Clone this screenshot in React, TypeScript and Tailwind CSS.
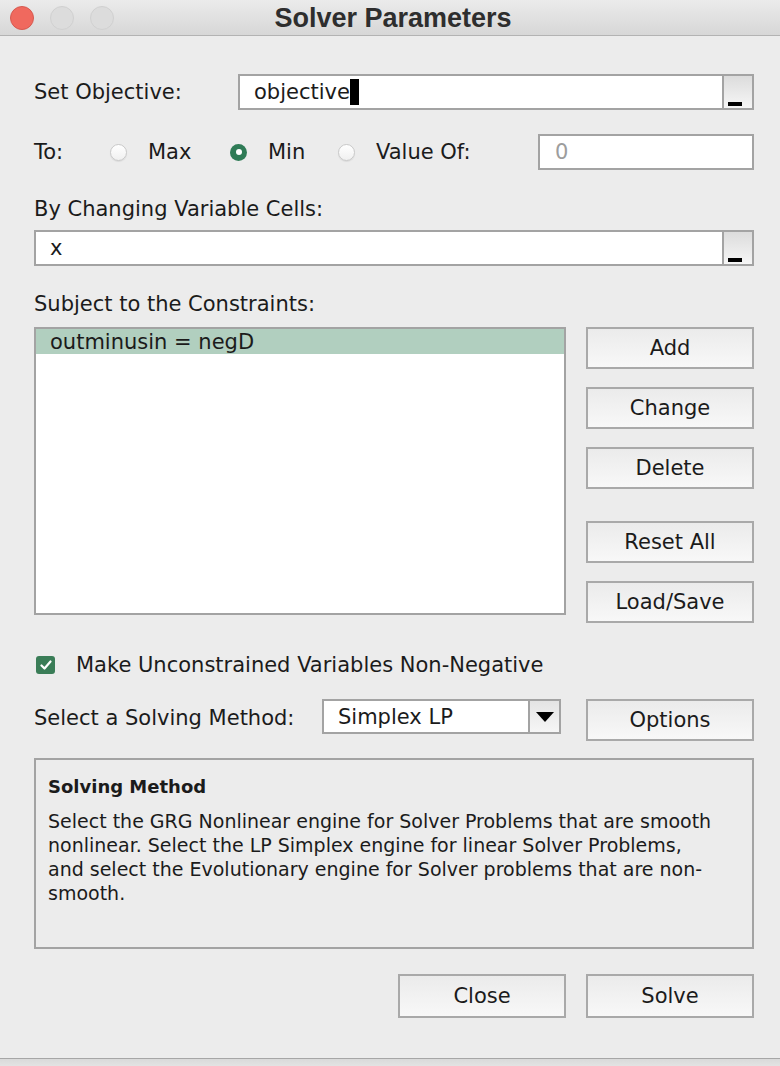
import { useState } from "react";

const btn =
  "w-[168px] flex items-center justify-center border-2 border-[#a9a9a9] bg-linear-to-b from-[#ebebeb] to-[#f8f8f8] text-[#1b1b1b]";

const Button = ({ label, className = "" }: { label: string; className?: string }) => (
  <button className={`${btn} ${className}`}>{label}</button>
);

// the little "_" picker button at the right of the cell inputs
const RefButton = () => (
  <div className="w-[30px] h-full border-l-2 border-[#a3a3a3] bg-linear-to-b from-[#dcdcdc] to-[#f6f6f6] flex items-end pl-[4px] pb-[2px]">
    <div className="w-[14px] h-[4px] bg-black" />
  </div>
);

const Radio = ({ checked }: { checked?: boolean }) =>
  checked ? (
    <div className="w-[17px] h-[17px] rounded-full bg-[#2f7b56] flex items-center justify-center">
      <div className="w-[6px] h-[6px] rounded-full bg-white" />
    </div>
  ) : (
    <div className="w-[17px] h-[17px] rounded-full border border-[#c9c9c9] bg-linear-to-b from-[#ffffff] to-[#f0f0f0] shadow-[0_1px_1px_rgba(0,0,0,0.08)]" />
  );

const App = () => {
  const [mode, setMode] = useState("min");
  const [nonNeg, setNonNeg] = useState(true);

  return (
    <div className="w-[780px] h-[1066px] bg-[#ececec] flex flex-col text-[21px] leading-[24px] text-[#1b1b1b] font-['DejaVu_Sans',sans-serif] overflow-hidden">
      {/* title bar */}
      <div className="h-[36px] shrink-0 grid grid-cols-[1fr_auto_1fr] items-center border-b border-[#b3b3b3] bg-linear-to-b from-[#ebebeb] to-[#d7d7d7]">
        <div className="flex items-center gap-[16px] pl-[10px]">
          <div className="w-[24px] h-[24px] rounded-full bg-[#f0695e] border border-[#d65a50]" />
          <div className="w-[24px] h-[24px] rounded-full bg-[#dcdcdc] border border-[#d0d0d0]" />
          <div className="w-[24px] h-[24px] rounded-full bg-[#dcdcdc] border border-[#d0d0d0]" />
        </div>
        <div className="font-['Liberation_Sans',sans-serif] font-bold text-[27px] text-[#2e2e2e] pl-[6px]">
          Solver Parameters
        </div>
        <div />
      </div>

      <div className="flex-1 flex flex-col pl-[34px] pr-[26px]">
        {/* objective */}
        <div className="mt-[38px] h-[36px] flex items-center">
          <div className="w-[204px]">Set Objective:</div>
          <div className="flex-1 h-[36px] border-2 border-[#a3a3a3] bg-white flex items-center">
            <div className="flex-1 flex items-center pl-[14px]">
              <span>objective</span>
              <span className="w-[9px] h-[26px] bg-black" />
            </div>
            <RefButton />
          </div>
        </div>

        {/* to */}
        <div className="mt-[24px] h-[36px] flex items-center">
          <div className="w-[76px]">To:</div>
          <div className="w-[120px] flex items-center gap-[21px]" onClick={() => setMode("max")}>
            <Radio checked={mode === "max"} />
            <span>Max</span>
          </div>
          <div className="w-[108px] flex items-center gap-[21px]" onClick={() => setMode("min")}>
            <Radio checked={mode === "min"} />
            <span>Min</span>
          </div>
          <div className="w-[200px] flex items-center gap-[21px]" onClick={() => setMode("value")}>
            <Radio checked={mode === "value"} />
            <span>Value Of:</span>
          </div>
          <div className="flex-1 h-[36px] border-2 border-[#a3a3a3] bg-white flex items-center pl-[15px] text-[#9d9d9d]">
            0
          </div>
        </div>

        {/* changing cells */}
        <div className="mt-[27px]">By Changing Variable Cells:</div>
        <div className="mt-[9px] h-[36px] border-2 border-[#a3a3a3] bg-white flex items-center">
          <div className="flex-1 pl-[14px]">x</div>
          <RefButton />
        </div>

        {/* constraints */}
        <div className="mt-[26px]">Subject to the Constraints:</div>
        <div className="mt-[11px] flex">
          <div className="w-[532px] h-[288px] border-2 border-[#a3a3a3] bg-white">
            <div className="h-[25px] bg-[#b1cfbf] flex items-center pl-[14px]">outminusin = negD</div>
          </div>
          <div className="ml-[20px] flex flex-col">
            <Button label="Add" className="h-[42px]" />
            <Button label="Change" className="h-[42px] mt-[18px]" />
            <Button label="Delete" className="h-[42px] mt-[18px]" />
            <Button label="Reset All" className="h-[42px] mt-[32px]" />
            <Button label="Load/Save" className="h-[42px] mt-[18px]" />
          </div>
        </div>

        {/* non-negative */}
        <div className="mt-[30px] flex items-center" onClick={() => setNonNeg(!nonNeg)}>
          <div className="ml-[2px] w-[19px] h-[18px] rounded-[3px] bg-[#3a7d57] flex items-center justify-center">
            {nonNeg && (
              <svg width="12" height="10" viewBox="0 0 12 10">
                <path d="M1.5 5.5 L4.5 8.5 L10.5 1.5" fill="none" stroke="white" strokeWidth="2.2" strokeLinecap="round" strokeLinejoin="round" />
              </svg>
            )}
          </div>
          <span className="ml-[21px]">Make Unconstrained Variables Non-Negative</span>
        </div>

        {/* solving method */}
        <div className="mt-[22px] flex items-start">
          <div className="w-[288px] leading-[38px]">Select a Solving Method:</div>
          <div className="w-[239px] h-[35px] border-2 border-[#a3a3a3] bg-white flex">
            <div className="flex-1 flex items-center pl-[14px]">Simplex LP</div>
            <div className="w-[31px] border-l-2 border-[#a3a3a3] bg-linear-to-b from-[#e4e4e4] to-[#f6f6f6] flex items-center justify-center">
              <svg width="18" height="10" viewBox="0 0 18 10">
                <path d="M0 0 H18 L9 10 Z" fill="black" />
              </svg>
            </div>
          </div>
          <Button label="Options" className="ml-[25px] h-[42px]" />
        </div>

        {/* description */}
        <div className="mt-[17px] h-[191px] border-2 border-[#a3a3a3] bg-[#ececec] px-[12px] pt-[15px]">
          <div className="font-bold text-[18px]">Solving Method</div>
          <div className="mt-[10px] whitespace-nowrap text-[19px]">
            Select the GRG Nonlinear engine for Solver Problems that are smooth
            <br />
            nonlinear. Select the LP Simplex engine for linear Solver Problems,
            <br />
            and select the Evolutionary engine for Solver problems that are non-
            <br />
            smooth.
          </div>
        </div>

        {/* footer buttons */}
        <div className="mt-[25px] flex justify-end gap-[20px]">
          <Button label="Close" className="h-[44px]" />
          <Button label="Solve" className="h-[44px]" />
        </div>
      </div>

      <div className="h-[8px] shrink-0 border-t border-[#a6a6a6] bg-linear-to-b from-[#d9d9d9] to-[#e3e3e3]" />
    </div>
  );
};

export default App;
